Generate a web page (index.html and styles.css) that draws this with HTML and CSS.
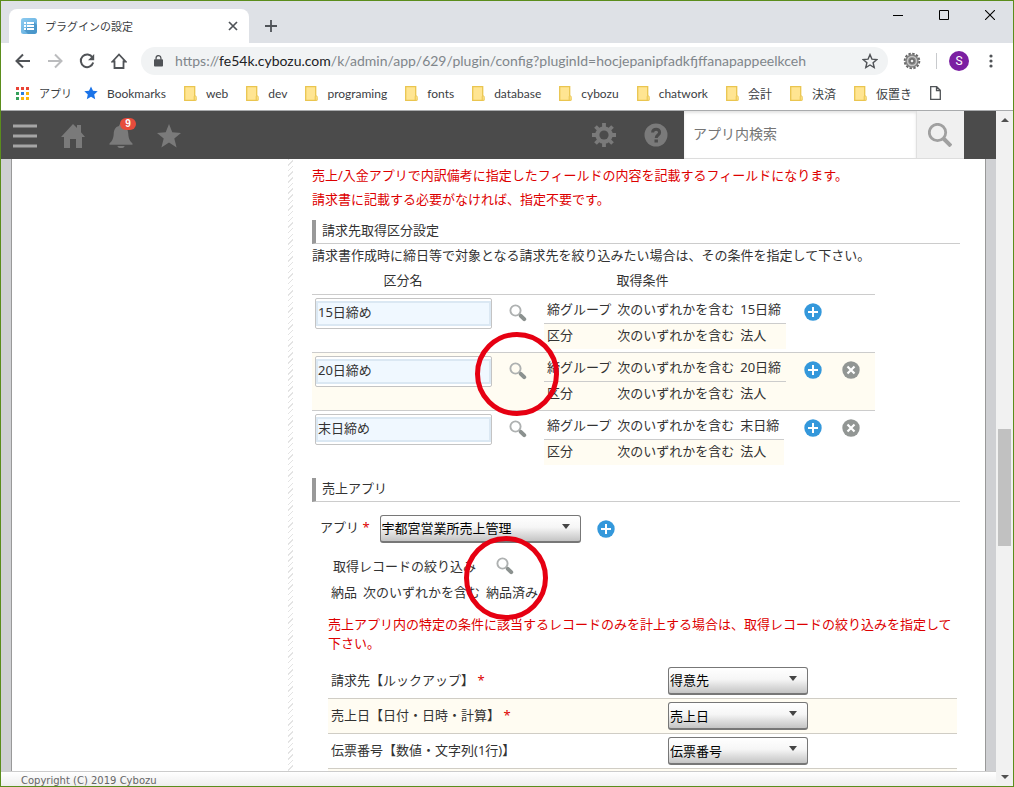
FILE: index.html
```html
<!DOCTYPE html>
<html lang="ja">
<head>
<meta charset="utf-8">
<title>プラグインの設定</title>
<link rel="stylesheet" href="styles.css">
</head>
<body>
<svg class="defs" aria-hidden="true">
  <defs>
    <linearGradient id="tabfill" x1="0" y1="0" x2="1" y2="1"><stop offset="0" stop-color="#8ecbf0"/><stop offset="1" stop-color="#5aa9dc"/></linearGradient>
    <symbol id="i-folder" viewBox="0 0 13 15"><path d="M.7.7h10v13.6H.7z" fill="#ffe592" stroke="#eac54f" stroke-width="1.3"/><path d="M10.2 10.2c1.200-1 2 0 2 1v3.100H10.200z" fill="#ffe592" stroke="#eac54f"/></symbol>
    <symbol id="i-mag" viewBox="0 0 18 18"><circle cx="6.500" cy="6.500" r="5.100" fill="none" stroke="#aeb1b1" stroke-width="1.900"/><path d="M11.800 11.800l3.400 3.400" stroke="#8b918f" stroke-width="4" stroke-linecap="round"/></symbol>
    <symbol id="i-plus" viewBox="0 0 18 18"><circle cx="9" cy="9" r="8.700" fill="#3498db"/><path d="M9 4v10M4 9h10" stroke="#fff" stroke-width="2"/></symbol>
    <symbol id="i-remove" viewBox="0 0 18 18"><circle cx="9" cy="9" r="8.700" fill="#929694"/><path d="M5.500 5.500l7 7M12.500 5.500l-7 7" stroke="#fff" stroke-width="2.200"/></symbol>
  </defs>
</svg>
<div class="window">
  <header class="tabs">
    <div class="tab">
      <svg width="16" height="16" viewBox="0 0 16 16"><rect width="16" height="16" rx="2.500" fill="url(#tabfill)"/><path d="M13 4l3 3v7l-2 2H7l-4-4z" fill="#3a87bd" opacity=".6"/><path d="M3 4h2v2H3zM6 4h7v2H6zM3 7h2v2H3zM6 7h7v2H6zM3 10h2v2H3zM6 10h7v2H6z" fill="#fff"/></svg>
      <span class="tab-title">プラグインの設定</span>
      <button class="icon-btn" aria-label="タブを閉じる"><svg width="10" height="10" viewBox="0 0 10 10"><path d="M1 1l8 8M9 1L1 9" stroke="#4f5358" stroke-width="1.700"/></svg></button>
    </div>
    <button class="icon-btn new-tab" aria-label="新しいタブ"><svg width="12" height="12" viewBox="0 0 12 12"><path d="M6 0v12M0 6h12" stroke="#4f5358" stroke-width="1.800"/></svg></button>
    <div class="win-controls">
      <button class="icon-btn" aria-label="最小化"><svg width="10" height="10" viewBox="0 0 10 10"><path d="M0 5.500h10" stroke="#000"/></svg></button>
      <button class="icon-btn" aria-label="最大化"><svg width="10" height="10" viewBox="0 0 10 10"><path d="M.5.5h9v9h-9z" fill="none" stroke="#000"/></svg></button>
      <button class="icon-btn" aria-label="閉じる"><svg width="10" height="10" viewBox="0 0 10 10"><path d="M0 0l10 10M10 0L0 10" stroke="#000" stroke-width="1.100"/></svg></button>
    </div>
  </header>
  <nav class="toolbar">
    <div class="nav-buttons">
      <button class="icon-btn" aria-label="戻る"><svg width="16" height="16" viewBox="0 0 16 16" fill="none" stroke="#505357" stroke-width="2"><path d="M15 8H2M8 1.500L1.500 8 8 14.500"/></svg></button>
      <button class="icon-btn" aria-label="進む"><svg width="16" height="16" viewBox="0 0 16 16" fill="none" stroke="#bbbcbe" stroke-width="2"><path d="M1 8h13M8 1.500L14.500 8 8 14.500"/></svg></button>
      <button class="icon-btn" aria-label="再読み込み"><svg width="16" height="16" viewBox="0 0 16 16"><path d="M13.500 4.500A6.300 6.300 0 1 0 14.200 9.500" fill="none" stroke="#505357" stroke-width="2"/><path d="M15.200 1v6.200H9z" fill="#505357"/></svg></button>
      <button class="icon-btn" aria-label="ホーム"><svg width="16" height="16" viewBox="0 0 16 16" fill="none" stroke="#505357" stroke-width="1.800"><path d="M1.500 8.500L8 1.500l6.500 7h-2V15h-9V8.500z"/></svg></button>
    </div>
    <div class="omnibox">
      <svg width="9" height="12" viewBox="0 0 10 13"><rect x="0" y="4.500" width="10" height="8" rx="1" fill="#505357"/><path d="M2.300 5V3.200a2.700 2.700 0 0 1 5.400 0V5" fill="none" stroke="#505357" stroke-width="1.400"/></svg>
      <span class="url">https://<span class="host">fe54k.cybozu.com</span>/k/admin/app/629/plugin/config?pluginId=hocjepanipfadkfjffanapappeelkceh</span>
      <button class="icon-btn" aria-label="ブックマークに追加"><svg width="16" height="16" viewBox="0 0 16 16"><path d="M8 1.600l1.900 4.500 4.900.4-3.700 3.200 1.100 4.800L8 12l-4.200 2.500 1.100-4.800L1.200 6.500l4.900-.4z" fill="none" stroke="#505357" stroke-width="1.400"/></svg></button>
    </div>
    <div class="tool-right">
      <button class="icon-btn" aria-label="拡張機能"><svg width="18" height="18" viewBox="0 0 18 18"><circle cx="9" cy="9" r="7.300" fill="none" stroke="#666" stroke-width="2" stroke-dasharray="2.400 1.422"/><circle cx="9" cy="9" r="6.700" fill="#808080"/><circle cx="9" cy="9" r="4.500" fill="none" stroke="#c4c4c4" stroke-width="1.500"/><circle cx="9" cy="9" r="2" fill="#eee" stroke="#555"/></svg></button>
      <span class="sep"></span>
      <button class="avatar">S</button>
      <button class="icon-btn" aria-label="メニュー"><svg width="4" height="14" viewBox="0 0 4 14" fill="#505357"><circle cx="2" cy="2" r="1.600"/><circle cx="2" cy="7" r="1.600"/><circle cx="2" cy="12" r="1.600"/></svg></button>
    </div>
  </nav>
  <nav class="bookmarks">
    <a href="#" class="apps"><svg width="13" height="13" viewBox="0 0 13 13"><path d="M0 0h3v3H0zM5 0h3v3H5zM10 0h3v3h-3z" fill="#ea4335"/><path d="M0 5h3v3H0zM0 10h3v3H0z" fill="#34a05a"/><path d="M5 5h3v3H5z" fill="#2a7de1"/><path d="M10 5h3v3h-3zM5 10h3v3H5zM10 10h3v3h-3z" fill="#fbb30b"/></svg><span class="small">アプリ</span></a>
    <a href="#" class="starred"><svg width="14" height="14" viewBox="0 0 14 14"><path d="M7 .5l2 4.300 4.700.5-3.500 3.200 1 4.700L7 10.800l-4.200 2.400 1-4.700L.3 5.300 5 4.800z" fill="#1a73e8"/></svg><span>Bookmarks</span></a>
    <a href="#"><svg width="13" height="15"><use href="#i-folder"/></svg><span>web</span></a>
    <a href="#"><svg width="13" height="15"><use href="#i-folder"/></svg><span>dev</span></a>
    <a href="#"><svg width="13" height="15"><use href="#i-folder"/></svg><span>programing</span></a>
    <a href="#"><svg width="13" height="15"><use href="#i-folder"/></svg><span>fonts</span></a>
    <a href="#"><svg width="13" height="15"><use href="#i-folder"/></svg><span>database</span></a>
    <a href="#"><svg width="13" height="15"><use href="#i-folder"/></svg><span>cybozu</span></a>
    <a href="#"><svg width="13" height="15"><use href="#i-folder"/></svg><span>chatwork</span></a>
    <a href="#"><svg width="13" height="15"><use href="#i-folder"/></svg><span>会計</span></a>
    <a href="#"><svg width="13" height="15"><use href="#i-folder"/></svg><span>決済</span></a>
    <a href="#"><svg width="13" height="15"><use href="#i-folder"/></svg><span>仮置き</span></a>
    <a href="#" aria-label="ページ"><svg width="11" height="14" viewBox="0 0 11 14"><path d="M.7.7h6L10.300 4.300v9H.7z M6.500.7v3.800h3.800" fill="none" stroke="#505357" stroke-width="1.300"/></svg></a>
  </nav>
  <div class="viewport">
    <div class="page">
      <header class="appbar">
        <div class="app-icons">
          <button class="icon-btn" aria-label="メニュー"><svg width="24" height="24" viewBox="0 0 24 24"><path d="M0 2h24M0 12h24M0 22h24" stroke="#a5a5a5" stroke-width="3"/></svg></button>
          <button class="icon-btn" aria-label="ホーム"><svg width="24" height="24" viewBox="0 0 24 24"><path d="M0 13L12 0l4 4V1h4v7.200L24 13h-3v11h-6v-9H9v9H3V13z" fill="#7a7a7a"/></svg></button>
          <button class="icon-btn bell" aria-label="通知"><svg width="24" height="24" viewBox="0 0 24 24"><path d="M12 0a2 2 0 0 1 2 2c4 1 5 4 5.300 8 .3 5 1.700 7 4.200 9.500v1.300H.5v-1.300C3 17 4.400 15 4.700 10 5 6 6 3 10 2a2 2 0 0 1 2-2zM8.500 22h7a3.500 2 0 0 1-7 0z" fill="#7a7a7a"/></svg><span class="badge">9</span></button>
          <button class="icon-btn" aria-label="お気に入り"><svg width="24" height="24" viewBox="0 0 24 24"><path d="M12 0l3.300 8.200 8.700.7-6.700 5.700 2.300 8.900-7.600-4.900-7.600 4.900 2.300-8.900L0 8.900l8.700-.7z" fill="#7a7a7a"/></svg></button>
        </div>
        <div class="app-tools">
          <button class="icon-btn" aria-label="設定"><svg width="24" height="24" viewBox="0 0 24 24"><g stroke="#7a7a7a" stroke-width="3.800"><path d="M12 0v24M0 12h24M3.500 3.500l17 17M20.500 3.500l-17 17"/></g><circle cx="12" cy="12" r="8.700" fill="#7a7a7a"/><circle cx="12" cy="12" r="4.600" fill="#4b4b4b"/></svg></button>
          <button class="icon-btn" aria-label="ヘルプ"><svg width="24" height="24" viewBox="0 0 24 24"><circle cx="12" cy="12" r="11.500" fill="#7a7a7a"/><path d="M8.600 9.500c0-4.500 7-4.500 7 0 0 2.500-3.400 2.600-3.400 5.500" fill="none" stroke="#4b4b4b" stroke-width="3"/><path d="M10.500 16.500h3.400v3h-3.400z" fill="#4b4b4b"/></svg></button>
        </div>
        <form class="search">
          <input type="text" placeholder="アプリ内検索" aria-label="アプリ内検索">
          <button type="button" aria-label="検索"><svg width="24" height="24" viewBox="0 0 24 24" fill="none" stroke="#a0a0a0"><circle cx="9.500" cy="9.500" r="8.200" stroke-width="2.800"/><path d="M15.500 15.500l7.500 7.500" stroke-width="4"/></svg></button>
        </form>
      </header>
      <div class="body">
        <aside class="side"></aside>
        <div class="stripes"></div>
        <main class="main">
          <p class="note">売上/入金アプリで内訳備考に指定したフィールドの内容を記載するフィールドになります。</p>
          <p class="note">請求書に記載する必要がなければ、指定不要です。</p>
          <h2>請求先取得区分設定</h2>
          <p class="lead">請求書作成時に締日等で対象となる請求先を絞り込みたい場合は、その条件を指定して下さい。</p>
          <table class="groups">
            <colgroup><col class="c-name"><col class="c-cond"><col class="c-act"></colgroup>
            <thead><tr><th>区分名</th><th>取得条件</th><td></td></tr></thead>
            <tbody>
              <tr>
                <td><div class="field"><input type="text" value="15日締め" aria-label="区分名 1"></div></td>
                <td><div class="cond"><button class="icon-btn mag" aria-label="条件を編集"><svg width="18" height="18"><use href="#i-mag"/></svg></button>
                  <table class="rules"><tr><td>締グループ</td><td>次のいずれかを含む</td><td>15日締</td></tr><tr><td>区分</td><td>次のいずれかを含む</td><td>法人</td></tr></table></div></td>
                <td><div class="actions"><button class="icon-btn" aria-label="追加"><svg width="18" height="18"><use href="#i-plus"/></svg></button></div></td>
              </tr>
              <tr>
                <td><div class="field"><input type="text" value="20日締め" aria-label="区分名 2"></div></td>
                <td><div class="cond"><button class="icon-btn mag" aria-label="条件を編集"><svg width="18" height="18"><use href="#i-mag"/></svg><span class="ring ring-group"></span></button>
                  <table class="rules"><tr><td>締グループ</td><td>次のいずれかを含む</td><td>20日締</td></tr><tr><td>区分</td><td>次のいずれかを含む</td><td>法人</td></tr></table></div></td>
                <td><div class="actions"><button class="icon-btn" aria-label="追加"><svg width="18" height="18"><use href="#i-plus"/></svg></button><button class="icon-btn" aria-label="削除"><svg width="18" height="18"><use href="#i-remove"/></svg></button></div></td>
              </tr>
              <tr>
                <td><div class="field"><input type="text" value="末日締め" aria-label="区分名 3"></div></td>
                <td><div class="cond"><button class="icon-btn mag" aria-label="条件を編集"><svg width="18" height="18"><use href="#i-mag"/></svg></button>
                  <table class="rules"><tr><td>締グループ</td><td>次のいずれかを含む</td><td>末日締</td></tr><tr><td>区分</td><td>次のいずれかを含む</td><td>法人</td></tr></table></div></td>
                <td><div class="actions"><button class="icon-btn" aria-label="追加"><svg width="18" height="18"><use href="#i-plus"/></svg></button><button class="icon-btn" aria-label="削除"><svg width="18" height="18"><use href="#i-remove"/></svg></button></div></td>
              </tr>
            </tbody>
          </table>
          <h2>売上アプリ</h2>
          <div class="app-row">
            <label for="app">アプリ <span class="req">*</span></label>
            <span class="select wide"><select id="app"><option>宇都宮営業所売上管理</option></select></span>
            <button class="icon-btn" aria-label="追加"><svg width="18" height="18"><use href="#i-plus"/></svg></button>
          </div>
          <div class="filter-row"><span>取得レコードの絞り込み</span><button class="icon-btn mag" aria-label="絞り込みを編集"><svg width="18" height="18"><use href="#i-mag"/></svg><span class="ring ring-filter"></span></button></div>
          <div class="filter-rule"><span>納品</span><span>次のいずれかを含む</span><span>納品済み</span></div>
          <div class="detail">
            <p class="warn">売上アプリ内の特定の条件に該当するレコードのみを計上する場合は、取得レコードの絞り込みを指定して下さい。</p>
            <table class="fields">
              <colgroup><col class="c-label"><col></colgroup>
              <tr><td><label for="f1">請求先【ルックアップ】 <span class="req">*</span></label></td><td><span class="select"><select id="f1"><option>得意先</option></select></span></td></tr>
              <tr><td><label for="f2">売上日【日付・日時・計算】 <span class="req">*</span></label></td><td><span class="select"><select id="f2"><option>売上日</option></select></span></td></tr>
              <tr><td><label for="f3">伝票番号【数値・文字列(1行)】</label></td><td><span class="select"><select id="f3"><option>伝票番号</option></select></span></td></tr>
              <tr><td></td><td></td></tr>
            </table>
          </div>
        </main>
      </div>
      <footer class="footer">Copyright (C) 2019 Cybozu</footer>
    </div>
    <div class="scrollbar">
      <span class="arrow up"></span>
      <div class="track"><span class="thumb"></span></div>
      <span class="arrow down"></span>
    </div>
  </div>
</div>
</body>
</html>
```

FILE: styles.css
```css
* { box-sizing: border-box; }

body {
  margin: 0;
  font-family: "Noto Sans", "Noto Sans CJK JP", sans-serif;
  font-size: 13px;
  color: #333;
}

svg { display: block; }
.defs { position: absolute; width: 0; height: 0; }
p, h2 { margin: 0; }

.icon-btn {
  display: block;
  padding: 0;
  border: 0;
  background: none;
  flex: none;
}

.window {
  display: flex;
  flex-direction: column;
  height: 100vh;
  overflow: hidden;
  border: 1px solid #5b8d1c;
  background: #fff;
}

/* Browser frame */
.tabs {
  display: flex;
  flex: none;
  height: 42px;
  padding: 8px 18px 0 8px;
  background: #dee1e6;
}

.tab {
  display: flex;
  align-items: center;
  gap: 8px;
  width: 240px;
  padding: 0 11px 0 12px;
  border-radius: 8px 8px 0 0;
  background: #fff;
}

.tab-title { flex: 1; font-size: 11px; white-space: nowrap; color: #3c4043; }
.new-tab { margin-left: 16px; }

.win-controls {
  display: flex;
  gap: 36px;
  margin-left: auto;
  padding-top: 1px;
  align-items: flex-start;
}

.toolbar {
  display: flex;
  flex: none;
  align-items: center;
  height: 35px;
  padding: 0 20px 0 14px;
}

.nav-buttons { display: flex; gap: 16px; margin-right: 14px; }

.omnibox {
  display: flex;
  flex: 1;
  min-width: 0;
  align-items: center;
  height: 28px;
  padding: 0 10px 0 13px;
  border-radius: 14px;
  background: #f1f3f4;
}

.url {
  flex: 1;
  min-width: 0;
  margin-left: 12px;
  overflow: hidden;
  font-family: Lato, sans-serif;
  font-size: 14px;
  white-space: nowrap;
  color: #80868b;
}

.host { color: #202124; }
.tool-right { display: flex; align-items: center; margin-left: 15px; }
.sep { width: 1px; height: 16px; margin: 0 12px 0 15px; background: #c8cacd; }

.avatar {
  width: 20px;
  height: 20px;
  margin-right: 20px;
  padding: 0;
  border: 0;
  border-radius: 50%;
  background: #7b1fa2;
  color: #fff;
  font-family: Roboto, sans-serif;
  font-size: 12px;
  line-height: 20px;
}

.bookmarks {
  display: flex;
  flex: none;
  align-items: center;
  gap: 18px;
  height: 33px;
  padding: 0 15px 2px;
  border-bottom: 1px solid #a9abad;
  font-family: Lato, "Noto Sans CJK JP", sans-serif;
  font-size: 12px;
}

.bookmarks a {
  display: flex;
  gap: 9px;
  align-items: center;
  color: #3c4043;
  text-decoration: none;
  white-space: nowrap;
}

.bookmarks .apps { gap: 10px; margin-right: -6px; }
.bookmarks .small { font-size: 11px; }

/* Page */
.viewport { display: flex; flex: 1; min-height: 0; }
.page { display: flex; flex: 1; flex-direction: column; min-width: 0; }

.appbar {
  display: flex;
  flex: none;
  height: 48px;
  padding-right: 32px;
  background: #4b4b4b;
}

.app-icons { display: flex; align-items: center; gap: 24px; padding: 2px 0 0 12px; }
.app-tools { display: flex; align-items: center; gap: 28px; margin-left: auto; margin-right: 16px; }
.bell { position: relative; }

.badge {
  position: absolute;
  top: -6px;
  left: 11px;
  width: 16px;
  height: 12px;
  border-radius: 6px;
  background: #e74c3c;
  color: #fff;
  font-size: 10px;
  font-weight: bold;
  line-height: 12px;
}

.search { display: flex; width: 280px; border-bottom: 1px solid #ddd; }

.search input {
  flex: 1;
  min-width: 0;
  padding: 0 9px 2px;
  border: 0;
  background: #fff;
  box-shadow: inset 0 2px 3px #e4e4e4;
  font-family: inherit;
  font-size: 14px;
}

.search input::placeholder { color: #757575; }

.search button {
  display: grid;
  place-items: center;
  width: 48px;
  padding: 0 2px 0 0;
  border: 0;
  border-left: 1px solid #e0e0e0;
  background: #f0f0f0;
}

.body {
  display: flex;
  flex: 1;
  min-height: 0;
  margin: 0;
  overflow: hidden;
  border: solid #cfd0d3;
  border-width: 0 10px;
  background: #fff;
}

.side { flex: none; width: 277px; border-left: 1px solid #999; }
.stripes { flex: none; width: 5px; background: repeating-linear-gradient(135deg, #e3e3e3 0 1px, #fff 1px 4px); }

.main {
  flex: 1;
  min-width: 0;
  padding: 4px 25px 0 19px;
  border-right: 1px solid #999;
}

.note { line-height: 24px; color: #d00; }

h2 {
  height: 24px;
  margin-top: 9px;
  padding-left: 6px;
  border-left: 4px solid #999;
  border-bottom: 1px solid #ccc;
  font-size: 13px;
  font-weight: normal;
  line-height: 21px;
}

.lead { line-height: 22px; }

table { border-collapse: collapse; border-spacing: 0; }
td, th { padding: 0; text-align: left; font-weight: normal; vertical-align: top; }

.groups { width: 563px; table-layout: fixed; }
.c-name { width: 182px; }
.c-cond { width: 297px; }
.groups th { height: 28px; text-align: center; line-height: 28px; }
.groups > tbody > tr { height: 58px; border-top: 1px solid #ccc; }
.groups > tbody > tr:nth-child(even) { background: #fffcf2; }

.field {
  width: 177px;
  margin: 3px 0 0 3px;
  padding: 2px 0;
  border: 1px solid #c4c4c4;
  border-radius: 2px;
  background: #fff;
}

.field input {
  display: block;
  width: 100%;
  height: 25px;
  padding: 0 0 4px;
  border: 2px solid #dbe8f3;
  background: #f0f8ff;
  color: #333;
  font-family: inherit;
  font-size: 13px;
}

.cond { display: flex; align-items: flex-start; padding: 2px 0 0 15px; }
.cond .mag { margin: 7px 17px 0 0; }
.mag { position: relative; }
.rules td { height: 26px; padding: 0 3px; line-height: 24px; white-space: nowrap; }
.rules td:last-child { padding-right: 5px; }
.rules tr:last-child { border-top: 1px solid #ccc; background: #fffcf2; }
.rules tr:last-child td { line-height: 22px; }
.actions { display: flex; gap: 20px; padding: 8px 0 0 13px; }

.ring {
  position: absolute;
  z-index: 1;
  width: 84px;
  height: 84px;
  border: 5px solid #e60012;
  border-radius: 50%;
  pointer-events: none;
}

.ring-group { top: -30px; left: -34px; }
.ring-filter { top: -21px; left: -32px; }

.app-row { display: flex; align-items: center; gap: 10px; padding: 13px 0 0 8px; }
.app-row label { line-height: 24px; padding-bottom: 4px; }
.app-row .icon-btn { margin-left: 6px; }
.req { color: #d00; }

.select { display: block; position: relative; width: 140px; }
.wide { width: 201px; }

.select select {
  display: block;
  appearance: none;
  width: 100%;
  height: 28px;
  padding: 0 20px 0 1px;
  border: 1px solid #777;
  border-bottom-width: 2px;
  border-radius: 3px;
  background: linear-gradient(#fff 0%, #f6f6f6 45%, #c4c4c4 100%);
  color: #000;
  font-family: inherit;
  font-size: 13px;
}

.select::after {
  content: "";
  position: absolute;
  top: 9px;
  right: 11px;
  border: solid transparent;
  border-width: 5px 4px 0;
  border-top-color: #444;
  pointer-events: none;
}

.filter-row { display: flex; align-items: center; height: 24px; margin-top: 11px; padding-left: 21px; }
.filter-row span { line-height: 20px; }
.filter-row .mag { margin-left: 20px; }
.filter-rule { display: flex; gap: 6px; height: 28px; padding-left: 19px; line-height: 28px; }
.detail { margin: 9px 3px 0 16px; }
.warn { line-height: 19px; color: #d00; }
.fields { width: 100%; margin-top: 11px; table-layout: fixed; }
.c-label { width: 340px; }
.fields td { height: 35px; padding-top: 3px; }
.fields td:first-child { padding-left: 3px; line-height: 27px; }
.fields tr { border-bottom: 1px solid #d0cdc5; }
.fields tr:nth-child(even) { background: #fffcf2; }

.footer {
  flex: none;
  height: 15px;
  padding-left: 20px;
  overflow: hidden;
  border-top: 1px solid #ccc;
  background: linear-gradient(#fff, #eee);
  color: #666;
  font-family: "DejaVu Sans", sans-serif;
  font-size: 10px;
  line-height: 17px;
}

.scrollbar {
  display: flex;
  flex: none;
  flex-direction: column;
  align-items: center;
  width: 17px;
  padding: 7px 0;
  background: #f1f1f1;
}

.arrow { border: 4px solid transparent; }
.up { border-top-width: 0; border-bottom-color: #505050; }
.down { border-bottom-width: 0; border-top-color: #505050; }
.track { flex: 1; align-self: stretch; padding: 0 2px; }
.track::before { content: ""; display: block; height: 47%; }
.thumb { display: block; height: 18%; background: #c1c1c1; }
```
